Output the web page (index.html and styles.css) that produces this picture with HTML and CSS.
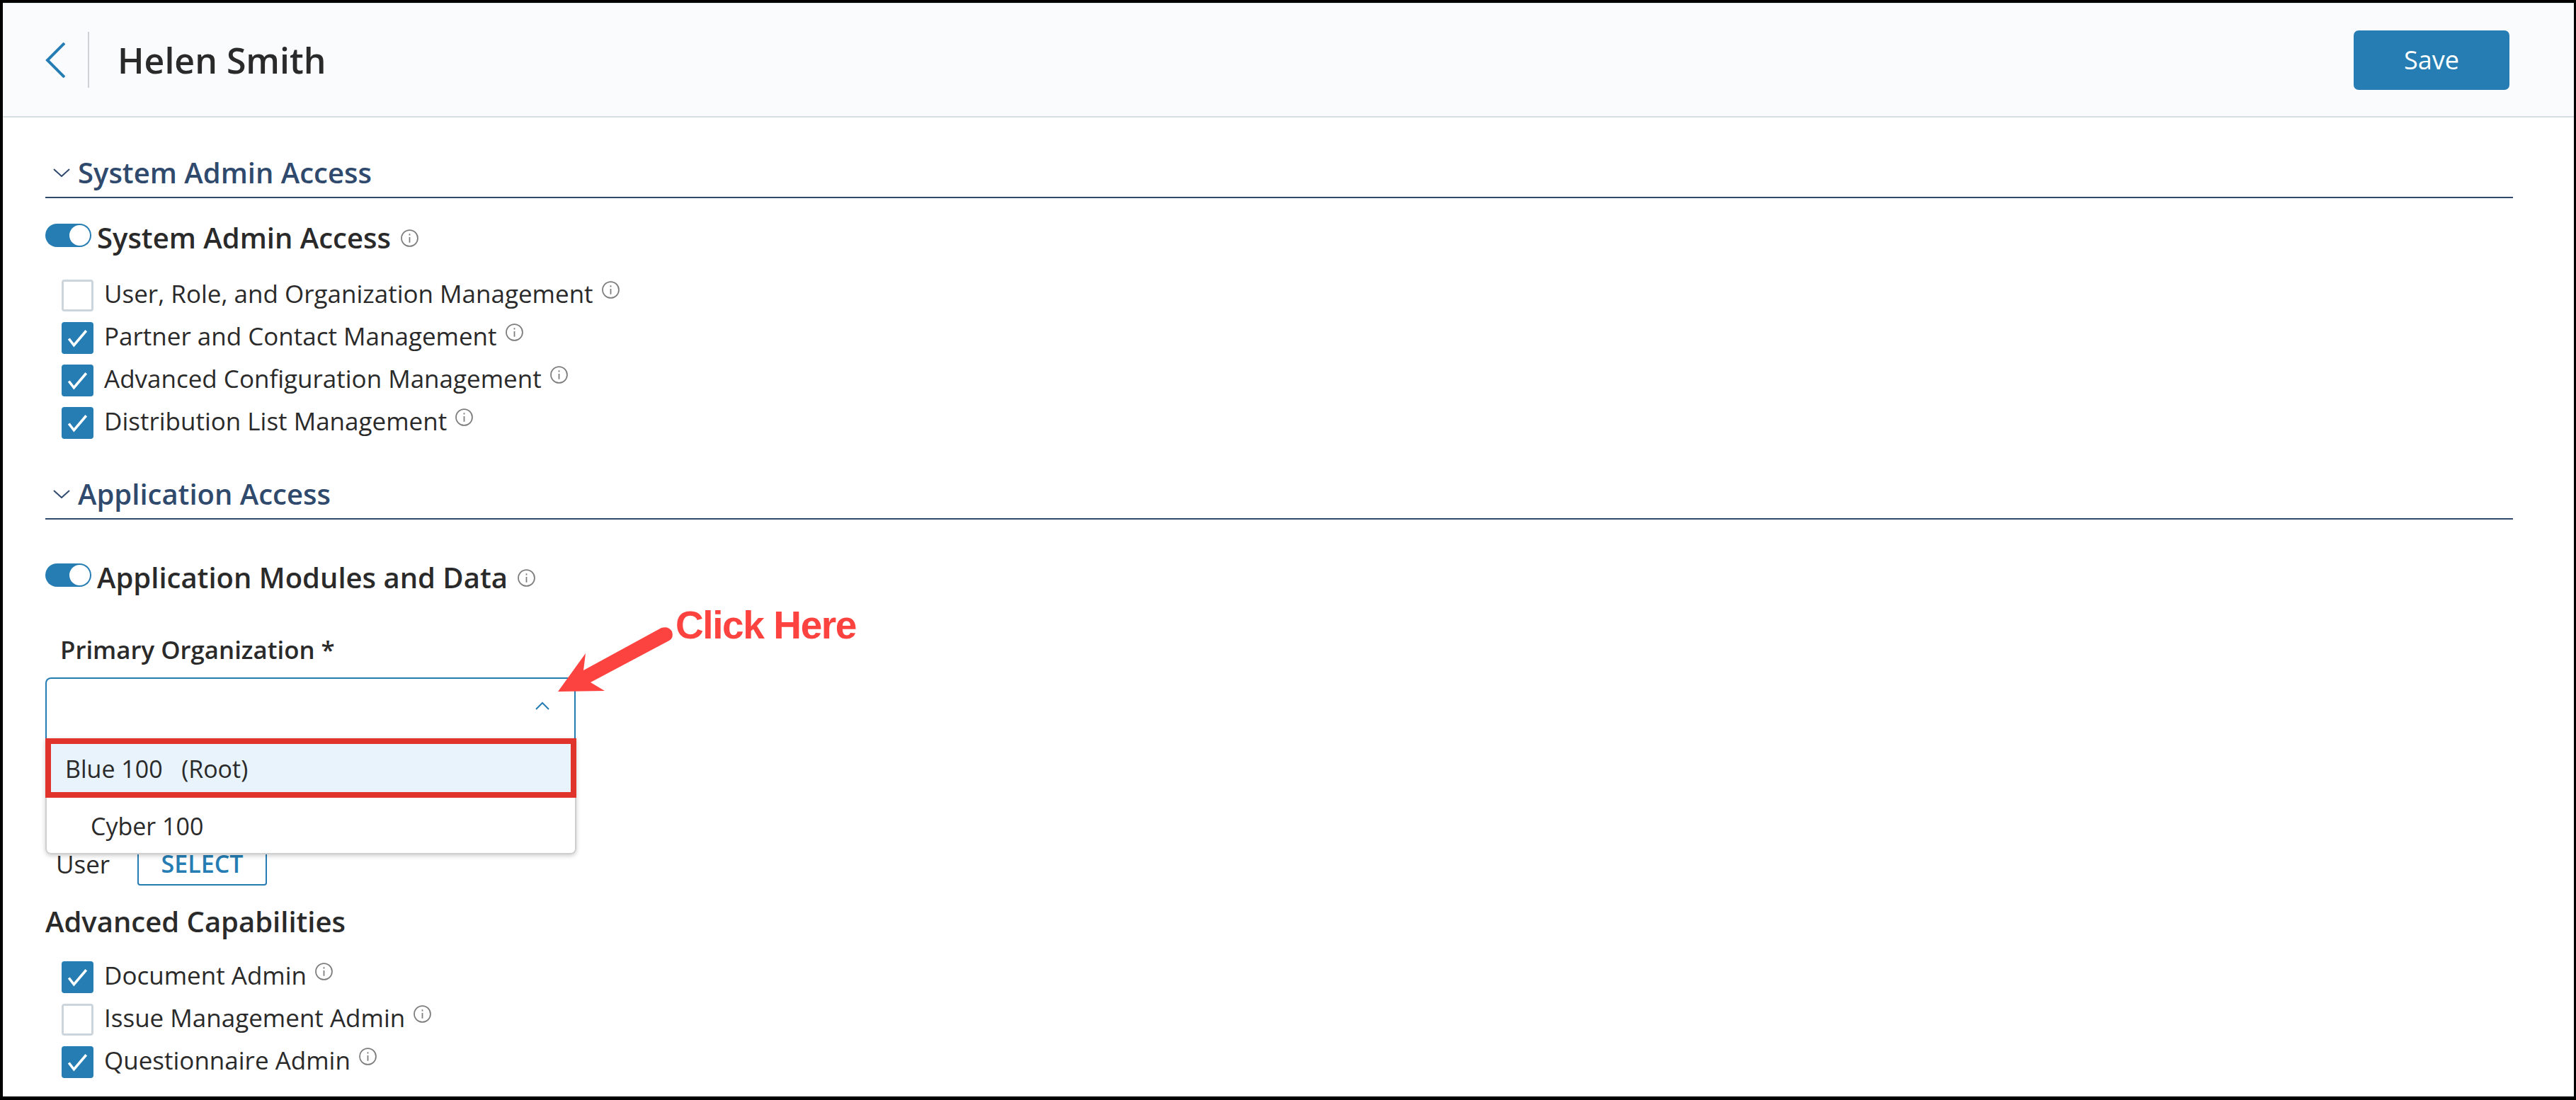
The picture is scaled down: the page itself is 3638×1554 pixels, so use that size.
FILE: index.html
```html
<!DOCTYPE html>
<html lang="en">
<head>
<meta charset="utf-8">
<title>Helen Smith</title>
<link rel="stylesheet" href="styles.css">
</head>
<body>
<div class="frame">
  <header class="topbar">
    <div class="topbar-left">
      <button class="back" aria-label="Back"><svg width="28" height="50" viewBox="0 0 28 50"><path d="M27 1 L3 25 L27 49" fill="none" stroke="#267db3" stroke-width="4"/></svg></button>
      <h1 class="title">Helen Smith</h1>
    </div>
    <button class="save">Save</button>
  </header>
  <main class="content">
    <div class="section-head">
      <svg class="caret" width="24" height="12" viewBox="0 0 24 12"><path d="M1 1 L12 11 L23 1" fill="none" stroke="#2f4a6d" stroke-width="2"/></svg>
      <h2 class="section-title">System Admin Access</h2>
    </div>
    <div class="toggle-row">
      <span class="toggle"><span class="knob"></span></span>
      <span class="toggle-label">System Admin Access</span>
      <svg class="info info-lg" viewBox="0 0 24 24"><circle cx="12" cy="12" r="11"/><path d="M12 10.5V18M12 6v2.2"/></svg>
    </div>
    <ul class="checks checks-first">
      <li class="check"><span class="box"></span><span class="check-label">User, Role, and Organization Management</span><svg class="info" viewBox="0 0 24 24"><circle cx="12" cy="12" r="11"/><path d="M12 10.5V18M12 6v2.2"/></svg></li>
      <li class="check"><span class="box on"><svg viewBox="0 0 44 44" class="tick"><path d="M10 23 L17 32 L34 12"/></svg></span><span class="check-label">Partner and Contact Management</span><svg class="info" viewBox="0 0 24 24"><circle cx="12" cy="12" r="11"/><path d="M12 10.5V18M12 6v2.2"/></svg></li>
      <li class="check"><span class="box on"><svg viewBox="0 0 44 44" class="tick"><path d="M10 23 L17 32 L34 12"/></svg></span><span class="check-label">Advanced Configuration Management</span><svg class="info" viewBox="0 0 24 24"><circle cx="12" cy="12" r="11"/><path d="M12 10.5V18M12 6v2.2"/></svg></li>
      <li class="check"><span class="box on"><svg viewBox="0 0 44 44" class="tick"><path d="M10 23 L17 32 L34 12"/></svg></span><span class="check-label">Distribution List Management</span><svg class="info" viewBox="0 0 24 24"><circle cx="12" cy="12" r="11"/><path d="M12 10.5V18M12 6v2.2"/></svg></li>
    </ul>
    <div class="section-head">
      <svg class="caret" width="24" height="12" viewBox="0 0 24 12"><path d="M1 1 L12 11 L23 1" fill="none" stroke="#2f4a6d" stroke-width="2"/></svg>
      <h2 class="section-title">Application Access</h2>
    </div>
    <div class="toggle-row toggle-row-app">
      <span class="toggle"><span class="knob"></span></span>
      <span class="toggle-label">Application Modules and Data</span>
      <svg class="info info-lg" viewBox="0 0 24 24"><circle cx="12" cy="12" r="11"/><path d="M12 10.5V18M12 6v2.2"/></svg>
    </div>
    <label class="field-label">Primary Organization *</label>
    <div class="select">
      <svg class="select-caret" width="20" height="12" viewBox="0 0 20 12"><path d="M1 11 L10 2 L19 11" fill="none" stroke="#267db3" stroke-width="2"/></svg>
      <div class="menu">
        <div class="option option-root">Blue 100 &nbsp; (Root)</div>
        <div class="option option-child">Cyber 100</div>
      </div>
    </div>
    <div class="user-row">
      <span class="user-label">User</span>
      <button class="select-btn">SELECT</button>
    </div>
    <h3 class="sub-title">Advanced Capabilities</h3>
    <ul class="checks checks-adv">
      <li class="check"><span class="box on"><svg viewBox="0 0 44 44" class="tick"><path d="M10 23 L17 32 L34 12"/></svg></span><span class="check-label">Document Admin</span><svg class="info" viewBox="0 0 24 24"><circle cx="12" cy="12" r="11"/><path d="M12 10.5V18M12 6v2.2"/></svg></li>
      <li class="check"><span class="box"></span><span class="check-label">Issue Management Admin</span><svg class="info" viewBox="0 0 24 24"><circle cx="12" cy="12" r="11"/><path d="M12 10.5V18M12 6v2.2"/></svg></li>
      <li class="check"><span class="box on"><svg viewBox="0 0 44 44" class="tick"><path d="M10 23 L17 32 L34 12"/></svg></span><span class="check-label">Questionnaire Admin</span><svg class="info" viewBox="0 0 24 24"><circle cx="12" cy="12" r="11"/><path d="M12 10.5V18M12 6v2.2"/></svg></li>
    </ul>
  </main>
  <svg class="arrow" width="180" height="110" viewBox="780 880 180 110"><path d="M788 977 L827 923 L824 947 L934 887 Q944 884 949 892 Q952 901 945 905 L834 964 L854 976 Z" fill="#fd4340"/></svg>
  <span class="callout">Click Here</span>
</div>
</body>
</html>
```
FILE: styles.css
```css
* { box-sizing: border-box; }
html, body { margin: 0; padding: 0; background: #fff; }
body { font-family: "Open Sans", "Noto Sans", sans-serif; color: #2a2a2a; }
h1, h2, h3, ul { margin: 0; padding: 0; list-style: none; }
button { font-family: inherit; cursor: pointer; }

.frame {
  position: relative;
  width: 3638px;
  height: 1554px;
  overflow: hidden;
  background: #fff;
  border-style: solid;
  border-color: #000;
  border-width: 4px 3px 5px 4px;
}

.topbar {
  display: flex;
  align-items: center;
  justify-content: space-between;
  height: 162px;
  padding: 0 91px 0 60px;
  background: #fafbfd;
  border-top: 1px solid #e4edf2;
  border-bottom: 2px solid #d5dfe4;
}
.topbar-left { display: flex; align-items: center; height: 79px; }
.back {
  display: flex;
  align-items: center;
  width: 62px;
  height: 79px;
  margin-right: 40px;
  padding: 0;
  background: none;
  border: 0;
  border-right: 2px solid #ccd2d6;
}
.title { font-size: 50px; font-weight: 600; line-height: 60px; color: #2a2a2a; }
.save {
  width: 220px;
  height: 84px;
  background: #267db3;
  border: 0;
  border-radius: 7px;
  color: #fff;
  font-size: 36px;
  font-weight: 500;
}

.content { padding: 0 86px 0 60px; }

.section-head {
  display: flex;
  align-items: flex-start;
  height: 58px;
  margin-top: 56px;
  border-bottom: 2px solid #2f4a6d;
}
.caret { margin: 16px 11px 0 11px; flex: none; }
.section-title { font-size: 40px; font-weight: 600; line-height: 44px; color: #2f4a6d; }

.toggle-row { display: flex; align-items: flex-start; height: 40px; margin-top: 36px; }
.toggle-row-app { margin-top: 62px; }
.toggle {
  position: relative;
  flex: none;
  width: 65px;
  height: 33px;
  margin-right: 8px;
  background: #267db3;
  border-radius: 17px;
}
.knob {
  position: absolute;
  top: 2px;
  right: 2px;
  width: 29px;
  height: 29px;
  background: #fff;
  border-radius: 50%;
}
.toggle-label { font-size: 40px; font-weight: 600; line-height: 40px; white-space: nowrap; }

.info {
  flex: none;
  width: 25px;
  height: 25px;
  margin: 2px 0 0 12px;
  fill: none;
  stroke: #7d7d7d;
  stroke-width: 1.7;
}
.info-lg { margin: 8px 0 0 14px; }

.checks { display: flex; flex-direction: column; gap: 15px; padding-left: 23px; }
.checks-first { margin-top: 39px; }
.checks-adv { margin-top: 34px; }
.check { display: flex; align-items: flex-start; height: 45px; }
.box {
  flex: none;
  width: 45px;
  height: 45px;
  margin-right: 15px;
  background: #fff;
  border: 3px solid #ccd5dc;
  border-radius: 4px;
}
.box.on { background: #267db3; border: 0; }
.tick { display: block; width: 45px; height: 45px; fill: none; stroke: #fff; stroke-width: 3.5; }
.check-label { font-size: 35px; line-height: 40px; white-space: nowrap; color: #2a2a2a; }

.field-label {
  display: block;
  margin: 62px 0 19px 21px;
  font-size: 34.8px;
  font-weight: 600;
  line-height: 40px;
}
.select {
  position: relative;
  width: 749px;
  height: 88px;
  border: 2px solid #267db3;
  border-bottom: 0;
  border-radius: 8px 8px 0 0;
}
.select-caret { position: absolute; top: 32px; right: 35px; }
.menu {
  position: absolute;
  z-index: 2;
  top: 84px;
  left: -2px;
  width: 750px;
  height: 164px;
  background: #fff;
  border-radius: 0 0 8px 8px;
  box-shadow: 0 2px 6px rgba(0, 0, 0, 0.2);
}
.option { font-size: 34px; white-space: nowrap; }
.option-root {
  height: 84px;
  padding-left: 20px;
  line-height: 70px;
  background: #e9f3fc;
  border: 8px solid #e0332c;
}
.option-child {
  height: 80px;
  padding-left: 62px;
  line-height: 80px;
  border: 2px solid #cfcfcf;
  border-top: 0;
  border-radius: 0 0 8px 8px;
}

.user-row { display: flex; align-items: center; height: 62px; margin-top: 144px; padding-left: 15px; }
.user-label { width: 115px; font-size: 35px; }
.select-btn {
  width: 183px;
  height: 62px;
  background: #fff;
  border: 2px solid #267db3;
  border-radius: 4px;
  color: #267db3;
  font-size: 34px;
  font-weight: 600;
}

.sub-title { margin-top: 29px; font-size: 40px; font-weight: 600; line-height: 44px; }

.arrow { position: absolute; left: 776px; top: 876px; z-index: 3; }
.callout {
  position: absolute;
  z-index: 3;
  left: 950px;
  top: 849px;
  font-family: "Liberation Sans", Arial, sans-serif;
  font-size: 55px;
  font-weight: 700;
  letter-spacing: -1.4px;
  line-height: 60px;
  color: #fd4340;
  white-space: nowrap;
}
```
